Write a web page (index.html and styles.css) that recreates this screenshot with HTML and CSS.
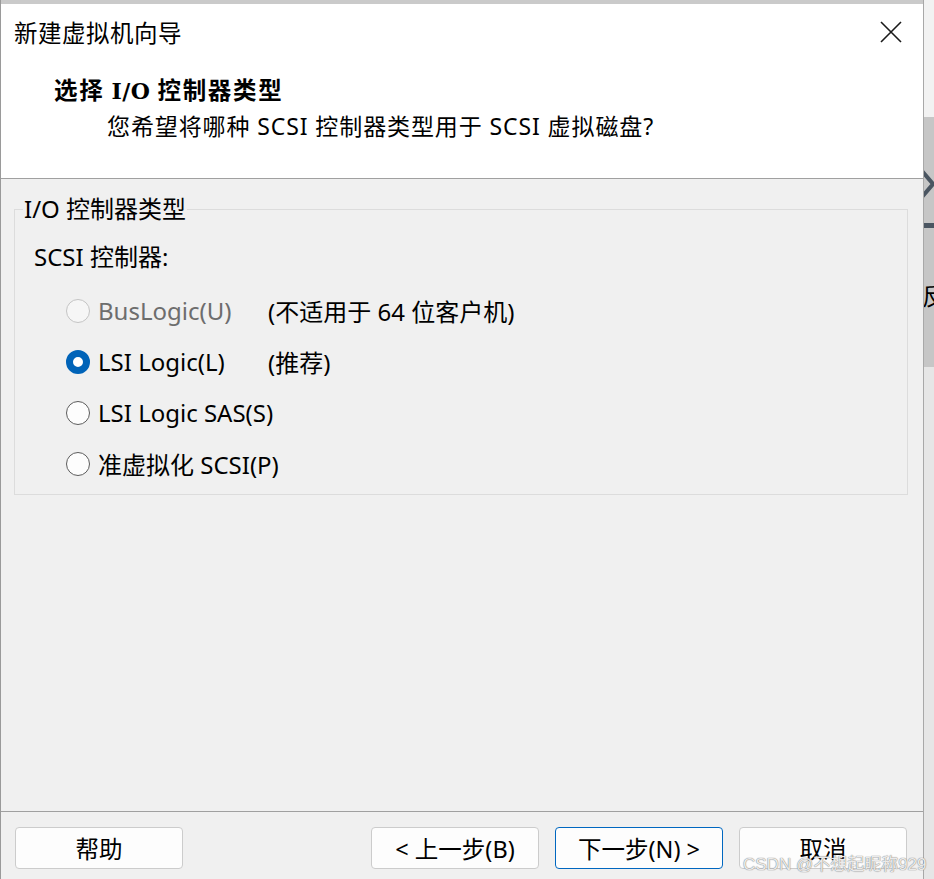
FILE: index.html
```html
<html>
<head>
	<meta http-equiv="Content-Type" content="text/html; charset=utf-8" />
	<link rel="stylesheet" href="styles.css">
</head>
<body>
<div class="screen">
	<div class="dialog">
		<div class="topline"></div>
		<div class="header">
			<div class="titlebar">
				<span class="title">新建虚拟机向导</span>
				<svg class="close" width="24" height="24" viewBox="0 0 24 24"><path d="M2 2 L22 22 M22 2 L2 22" stroke="#1a1a1a" stroke-width="1.6" fill="none"/></svg>
			</div>
			<div class="step">选择 <b>I/O</b> 控制器类型</div>
			<div class="question">您希望将哪种 SCSI 控制器类型用于 SCSI 虚拟磁盘?</div>
		</div>
		<div class="body">
			<fieldset class="group">
				<legend>I/O 控制器类型</legend>
				<div class="label">SCSI 控制器:</div>
				<div class="option disabled">
					<span class="radio"></span><span class="name">BusLogic(U)</span><span class="note">(不适用于 64 位客户机)</span>
				</div>
				<div class="option">
					<span class="radio checked"></span><span class="name">LSI Logic(L)</span><span class="note">(推荐)</span>
				</div>
				<div class="option">
					<span class="radio"></span><span class="name">LSI Logic SAS(S)</span>
				</div>
				<div class="option">
					<span class="radio"></span><span class="name">准虚拟化 SCSI(P)</span>
				</div>
			</fieldset>
		</div>
		<div class="footer">
			<button class="btn">帮助</button>
			<div class="spacer"></div>
			<button class="btn">&lt; 上一步(B)</button>
			<button class="btn primary">下一步(N) &gt;</button>
			<button class="btn">取消</button>
		</div>
	</div>
	<div class="side">
		<div class="side-top"></div>
		<div class="side-mid">
			<svg class="arrow" width="10" height="30" viewBox="0 0 10 30"><path d="M-2 2 L9 15 L-2 28" stroke="#4a5561" stroke-width="4" fill="none"/></svg>
			<span class="bar"></span>
			<span class="char">反</span>
		</div>
		<div class="side-bottom"></div>
	</div>
	<div class="mark">CSDN @不想起昵称929</div>
</div>
</body>
</html>
```

FILE: styles.css
```css
body {margin:0; background:#efefef;
	font-family: "Noto Sans", "Noto Sans CJK SC", sans-serif; color:#000;}
.screen {display:flex; width:934px; height:879px; position:relative; overflow:hidden;}
.dialog {width:924px; display:flex; flex-direction:column; background:#f0f0f0;
	border-left:1px solid #9a9a9a; border-right:1px solid #a8a8a8; box-sizing:border-box;}
.topline {height:4px; background:#cacaca; flex:none;}
.header {height:175px; background:#fff; border-bottom:1px solid #a0a0a0; flex:none; box-sizing:border-box;}
.titlebar {display:flex; align-items:center; justify-content:space-between; height:56px; padding:0 20px 0 13px;}
.title {font-family:"Noto Sans CJK SC", sans-serif; font-size:23.5px; letter-spacing:0.5px;}
.step {font-family:"Noto Sans CJK SC", sans-serif; font-size:23.5px; font-weight:bold; margin:14px 0 0 53px; line-height:30px; letter-spacing:1.7px;}
.step b {font-family:"DejaVu Serif", serif; font-size:22px; letter-spacing:0.5px;}
.question {font-size:23px; margin:5px 0 0 106px; line-height:30px; letter-spacing:0.9px;}
.body {flex:1;}
.group {margin:17px 15px 0 13px; padding:0 0 5px 0; border:1px solid #dcdcdc;}
.group legend {font-size:24px; line-height:26px; padding:0 1px; margin-left:8px;}
.label {font-size:24px; line-height:30px; margin:20px 0 0 19px;}
.option {display:flex; align-items:center; height:51px; padding-left:51px; font-size:24px; white-space:nowrap;}
.label + .option {margin-top:13px;}
.radio {width:24px; height:24px; border:1.5px solid #5c5c5c; border-radius:50%; box-sizing:border-box; background:#fdfdfd; margin-right:8px; flex:none;}
.radio.checked {border:7px solid #0063b8; background:#fff;}
.disabled .radio {border-color:#c4c4c4; background:#f6f6f6;}
.disabled .name {color:#6d6d6d;}
.name {min-width:170px;}
.footer {height:68px; border-top:1px solid #a0a0a0; display:flex; align-items:flex-start; padding:15px 16px 0 14px; gap:16px; flex:none; box-sizing:border-box;}
.spacer {flex:1;}
.btn {width:168px; height:42px; background:#fdfdfd; border:1px solid #cccccc; border-radius:4px;
	font-family:"Noto Sans", "Noto Sans CJK SC", sans-serif; font-size:23.5px; color:#000; padding:0;}
.btn.primary {border-color:#0067c0;}
.side {flex:1; display:flex; flex-direction:column;}
.side-top {height:117px; background:#f2f2f2;}
.side-mid {height:250px; background:#c6c6c6; position:relative; overflow:hidden;}
.side-bottom {flex:1; background:#e6e6e6;}
.arrow {position:absolute; left:0; top:52px;}
.bar {position:absolute; left:0; top:106px; width:10px; height:5px; background:#4a5561;}
.char {position:absolute; left:-2px; top:160px; font-size:24px; font-family:"Noto Sans CJK SC", sans-serif;}
.mark {position:absolute; left:743px; top:850px; white-space:nowrap; font-family:"Liberation Sans", "Noto Sans CJK SC", sans-serif; font-size:17px;
	color:rgba(255,255,255,0.85); text-shadow:0 0 1px #777, 0 0 1px #999;}
```
